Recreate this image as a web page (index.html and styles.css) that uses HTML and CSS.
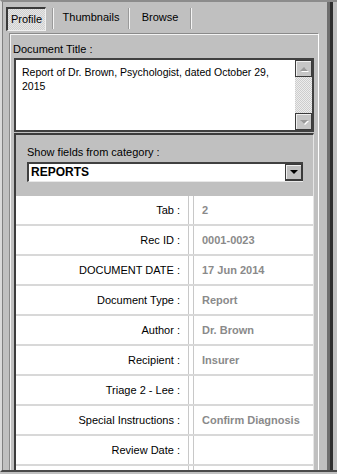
FILE: index.html
```html
<!DOCTYPE html>
<html lang="en">

<head>
    <meta charset="UTF-8">
    <title>Document Profile</title>
    <link rel="stylesheet" href="styles.css">
</head>

<body>

    <div class="window">
        <div class="frame">
            <div class="main">

                <!-- Tab strip -->
                <div class="tabs">
                    <div class="tab tab-active">Profile</div>
                    <span class="tab-sep"></span>
                    <div class="tab tab-thumbs">Thumbnails</div>
                    <span class="tab-sep"></span>
                    <div class="tab tab-browse">Browse</div>
                    <span class="tab-sep"></span>
                </div>

                <div class="panel">
                    <div class="field-label">Document Title :</div>
                    <div class="title-box">
                        <div class="title-text">Report of Dr. Brown, Psychologist, dated October 29, 2015</div>
                        <div class="scrollbar">
                            <div class="scroll-btn"><span class="arrow-up"></span></div>
                            <div class="scroll-track"></div>
                            <div class="scroll-btn"><span class="arrow-down"></span></div>
                        </div>
                    </div>

                    <div class="category">
                        <div class="category-head">
                            <div class="field-label">Show fields from category :</div>
                            <div class="select">
                                <span class="select-value">REPORTS</span>
                                <span class="select-btn"><span class="arrow-down arrow-dark"></span></span>
                            </div>
                        </div>

                        <div class="fields">
                            <div class="row">
                                <div class="row-label">Tab :</div>
                                <div class="row-sep"></div>
                                <div class="row-value">2</div>
                            </div>
                            <div class="row">
                                <div class="row-label">Rec ID :</div>
                                <div class="row-sep"></div>
                                <div class="row-value">0001-0023</div>
                            </div>
                            <div class="row">
                                <div class="row-label">DOCUMENT DATE :</div>
                                <div class="row-sep"></div>
                                <div class="row-value">17 Jun 2014</div>
                            </div>
                            <div class="row">
                                <div class="row-label">Document Type :</div>
                                <div class="row-sep"></div>
                                <div class="row-value">Report</div>
                            </div>
                            <div class="row">
                                <div class="row-label">Author :</div>
                                <div class="row-sep"></div>
                                <div class="row-value">Dr. Brown</div>
                            </div>
                            <div class="row">
                                <div class="row-label">Recipient :</div>
                                <div class="row-sep"></div>
                                <div class="row-value">Insurer</div>
                            </div>
                            <div class="row">
                                <div class="row-label">Triage 2 - Lee :</div>
                                <div class="row-sep"></div>
                                <div class="row-value"></div>
                            </div>
                            <div class="row">
                                <div class="row-label">Special Instructions :</div>
                                <div class="row-sep"></div>
                                <div class="row-value">Confirm Diagnosis</div>
                            </div>
                            <div class="row">
                                <div class="row-label">Review Date :</div>
                                <div class="row-sep"></div>
                                <div class="row-value"></div>
                            </div>
                            <div class="row">
                                <div class="row-label"></div>
                                <div class="row-sep"></div>
                                <div class="row-value"></div>
                            </div>
                        </div>
                    </div>
                </div>

            </div>
            <div class="edge"></div>
        </div>
    </div>

</body>

</html>
```

FILE: styles.css
```css
* {
    box-sizing: border-box;
}

body {
    margin: 0;
    font-family: "Liberation Sans", Arial, sans-serif;
    font-size: 11px;
    color: #000;
    background-color: #c0c0c0;
}

.window {
    width: 337px;
    height: 474px;
    overflow: hidden;
    background-color: #c0c0c0;
}

/* Outer window frame */
.frame {
    display: flex;
    height: 472px;
    overflow: hidden;
    border-top: 2px solid #8c8c8c;
    border-left: 2px solid #dadada;
    border-bottom: 2px solid #4a4a4a;
}

.main {
    width: 325px;
    border-left: 1px solid #808080;
}

.edge {
    width: 10px;
    background: linear-gradient(to right, #6e6e6e 0 3px, #2e2e2e 3px 6px, #c0c0c0 6px);
}

/* Tabs */
.tabs {
    display: flex;
    align-items: flex-start;
    height: 31px;
    padding: 5px 0 0 3px;
}

.tab {
    height: 24px;
    line-height: 21px;
    text-align: center;
}

.tab-active {
    width: 40px;
    margin-right: 6px;
    border-top: 2px solid #3a3a3a;
    border-left: 2px solid #3a3a3a;
    border-right: 1px solid #f0f0f0;
    border-bottom: 1px solid #f0f0f0;
    background: repeating-conic-gradient(#e6e6e6 0 25%, #d0d0d0 0 50%) 0 0 / 2px 2px;
    line-height: 20px;
}

.tab-thumbs {
    width: 74px;
}

.tab-browse {
    width: 60px;
}

.tab-sep {
    width: 2px;
    height: 21px;
    margin-top: 1px;
    border-left: 1px solid #9a9a9a;
    background-color: #f4f4f4;
}

/* Tab page */
.panel {
    width: 310px;
    margin-left: 6px;
    border-top: 1px solid #8a8a8a;
    border-left: 1px solid #8a8a8a;
    border-right: 1px solid #fff;
    box-shadow: inset 1px 1px #f4f4f4;
    padding: 8px 4px 0 4px;
}

.field-label {
    height: 14px;
    line-height: 14px;
    margin-left: -1px;
    margin-bottom: 2px;
}

/* Document title box */
.title-box {
    display: flex;
    height: 74px;
    margin-bottom: 1px;
    border: 2px solid #404040;
    background-color: #fff;
}

.title-text {
    flex: 1;
    padding: 5px 6px;
    font-size: 10.5px;
    line-height: 14px;
}

.scrollbar {
    width: 17px;
    display: flex;
    flex-direction: column;
}

.scroll-btn {
    height: 17px;
    display: flex;
    align-items: center;
    justify-content: center;
    border: 1px solid #3a3a3a;
    background-color: #c6c6c6;
    box-shadow: inset 1px 1px #f0f0f0;
}

.scroll-track {
    flex: 1;
    background: repeating-conic-gradient(#ededed 0 25%, #cdcdcd 0 50%) 0 0 / 2px 2px;
}

.arrow-up,
.arrow-down {
    width: 0;
    height: 0;
    border-left: 4px solid transparent;
    border-right: 4px solid transparent;
    filter: drop-shadow(1px 1px 0 #fff);
}

.arrow-up {
    border-bottom: 4px solid #9a9a9a;
}

.arrow-down {
    border-top: 4px solid #9a9a9a;
}

.arrow-down.arrow-dark {
    border-top-color: #000;
    filter: none;
}

/* Category section */
.category {
    border-top: 2px solid #3c3c3c;
    border-left: 2px solid #3c3c3c;
    border-right: 1px solid #e6e6e6;
}

.category-head {
    padding: 10px 10px 14px 11px;
}

.category-head .field-label {
    margin-left: 0;
    margin-bottom: 3px;
}

.select {
    display: flex;
    width: 276px;
    height: 20px;
    background-color: #fff;
    border-top: 2px solid #404040;
    border-left: 2px solid #404040;
    border-bottom: 1px solid #e8e8e8;
}

.select-value {
    flex: 1;
    padding-left: 2px;
    font-size: 12px;
    font-weight: bold;
    line-height: 17px;
}

.select-btn {
    width: 18px;
    display: flex;
    align-items: center;
    justify-content: center;
    border: 1px solid #3a3a3a;
    border-right-width: 2px;
    border-bottom-width: 2px;
    background-color: #c0c0c0;
    box-shadow: inset 1px 1px #f0f0f0;
}

/* Field rows */
.fields {
    background-color: #fff;
}

.row {
    display: flex;
    height: 30px;
    border-bottom: 2px solid #d8d8d8;
}

.row-label {
    width: 172px;
    padding-right: 8px;
    text-align: right;
    line-height: 28px;
}

.row-sep {
    width: 6px;
    border-left: 1px solid #c8c8c8;
    border-right: 1px solid #c8c8c8;
}

.row-value {
    flex: 1;
    padding-left: 8px;
    line-height: 28px;
    font-weight: bold;
    color: #8a8a8a;
}
```
